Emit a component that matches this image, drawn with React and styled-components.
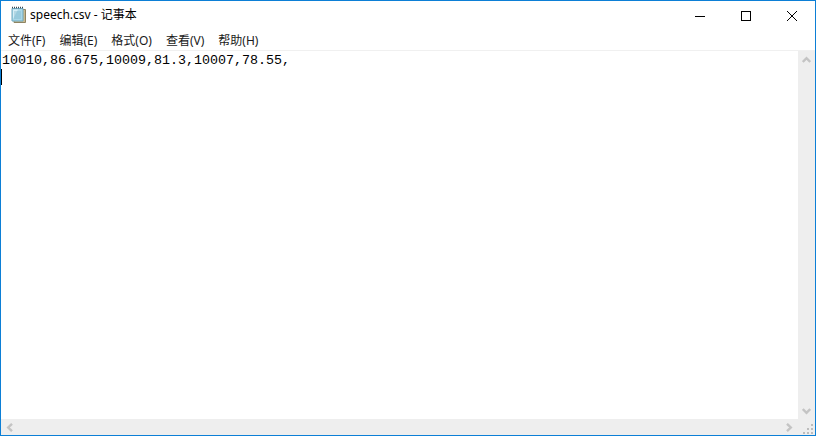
import React from "react";
import styled, { createGlobalStyle } from "styled-components";

const Global = createGlobalStyle`
  html, body {
    margin: 0;
    padding: 0;
    background: #ffffff;
  }
`;

const Window = styled.div`
  width: 816px;
  height: 436px;
  box-sizing: border-box;
  border: 1px solid #0c7fd6;
  display: flex;
  flex-direction: column;
  overflow: hidden;
  font-family: "Noto Sans", "Noto Sans CJK SC", sans-serif;
  color: #000000;
`;

const TitleBar = styled.div`
  height: 29px;
  display: flex;
  align-items: center;
  flex-shrink: 0;
`;

const AppIcon = styled.svg`
  width: 18px;
  height: 18px;
  margin-left: 8px;
  margin-top: -1px;
  flex-shrink: 0;
`;

const Title = styled.div`
  margin-left: 3px;
  margin-top: -1px;
  font-size: 12px;
  line-height: 16px;
  color: #000000;
  flex: 1;
`;

const WinButton = styled.div`
  width: 46px;
  height: 29px;
  display: flex;
  align-items: center;
  justify-content: center;
`;

const MenuBar = styled.div`
  height: 20px;
  display: flex;
  align-items: center;
  padding-left: 7px;
  gap: 14px;
  flex-shrink: 0;
`;

const MenuItem = styled.div`
  font-size: 12px;
  line-height: 16px;
  color: #1a1a1a;
  margin-top: 1px;
`;

const Divider = styled.div`
  height: 1px;
  background: #f0f0f0;
  flex-shrink: 0;
`;

const Body = styled.div`
  flex: 1;
  display: grid;
  grid-template-columns: 1fr 17px;
  grid-template-rows: 1fr 16px;
  min-height: 0;
`;

const Editor = styled.div`
  position: relative;
  padding: 2px 0 0 1px;
  font-family: "Liberation Mono", "Noto Sans CJK SC", monospace;
  font-size: 13.33px;
  line-height: 16px;
  color: #000000;
`;

const Caret = styled.div`
  position: absolute;
  left: 0;
  top: 18px;
  width: 1px;
  height: 16px;
  background: #000000;
`;

const VTrack = styled.div`
  background: #eeeeee;
  display: flex;
  flex-direction: column;
  justify-content: space-between;
`;

const HTrack = styled.div`
  background: #eeeeee;
  display: flex;
  justify-content: space-between;
`;

const Arrow = styled.div`
  width: ${(p) => p.$w}px;
  height: 16px;
  display: flex;
  align-items: center;
  justify-content: center;
  flex-shrink: 0;
`;

const Corner = styled.div`
  background: #eeeeee;
  display: flex;
  align-items: flex-end;
  justify-content: flex-end;
`;

const grey = "#c4c4c4";

function Chevron({ d }) {
  return (
    <svg width="9" height="9" viewBox="0 0 9 9">
      <path d={d} fill="none" stroke={grey} strokeWidth="2.4" />
    </svg>
  );
}

export default function App() {
  return (
    <>
      <Global />
      <Window>
        <TitleBar>
          <AppIcon viewBox="0 0 18 18">
            <path d="M5 3.5h11.5v13H5z" fill="#c9b98f" stroke="#8f8462" strokeWidth="1" />
            <path d="M3 2.5h11v12.5H3z" fill="#a9d7e8" stroke="#6fa9c0" strokeWidth="1" />
            <path d="M4 3.5h5L4 13z" fill="#d6eef6" />
            <path d="M3 1.5h11" stroke="#3a4a55" strokeWidth="1.4" strokeDasharray="1 1" />
            <path d="M5 6h7M5 8h7M5 10h7M5 12h7" stroke="#7fb6cc" strokeWidth="0.8" />
          </AppIcon>
          <Title>speech.csv - 记事本</Title>
          <WinButton>
            <svg width="10" height="10" viewBox="0 0 10 10">
              <path d="M0 5.5h10" stroke="#000" strokeWidth="1" />
            </svg>
          </WinButton>
          <WinButton>
            <svg width="10" height="10" viewBox="0 0 10 10">
              <rect x="0.5" y="0.5" width="9" height="9" fill="none" stroke="#000" strokeWidth="1" />
            </svg>
          </WinButton>
          <WinButton>
            <svg width="10" height="10" viewBox="0 0 10 10">
              <path d="M0 0l10 10M10 0L0 10" stroke="#000" strokeWidth="1" />
            </svg>
          </WinButton>
        </TitleBar>
        <MenuBar>
          <MenuItem>文件(F)</MenuItem>
          <MenuItem>编辑(E)</MenuItem>
          <MenuItem>格式(O)</MenuItem>
          <MenuItem>查看(V)</MenuItem>
          <MenuItem>帮助(H)</MenuItem>
        </MenuBar>
        <Divider />
        <Body>
          <Editor>
            10010,86.675,10009,81.3,10007,78.55,
            <Caret />
          </Editor>
          <VTrack>
            <Arrow $w={17}>
              <Chevron d="M0.8 7L4.5 3.2 8.2 7" />
            </Arrow>
            <Arrow $w={17}>
              <Chevron d="M0.8 2L4.5 5.8 8.2 2" />
            </Arrow>
          </VTrack>
          <HTrack>
            <Arrow $w={17}>
              <Chevron d="M7 0.8L3.2 4.5 7 8.2" />
            </Arrow>
            <Arrow $w={17}>
              <Chevron d="M2 0.8L5.8 4.5 2 8.2" />
            </Arrow>
          </HTrack>
          <Corner>
            <svg width="12" height="12" viewBox="0 0 12 12">
              <path d="M8 1h2v2H8zM4 5h2v2H4zM8 5h2v2H8zM0 9h2v2H0zM4 9h2v2H4zM8 9h2v2H8z" fill="#bdbdbd" />
            </svg>
          </Corner>
        </Body>
      </Window>
    </>
  );
}
